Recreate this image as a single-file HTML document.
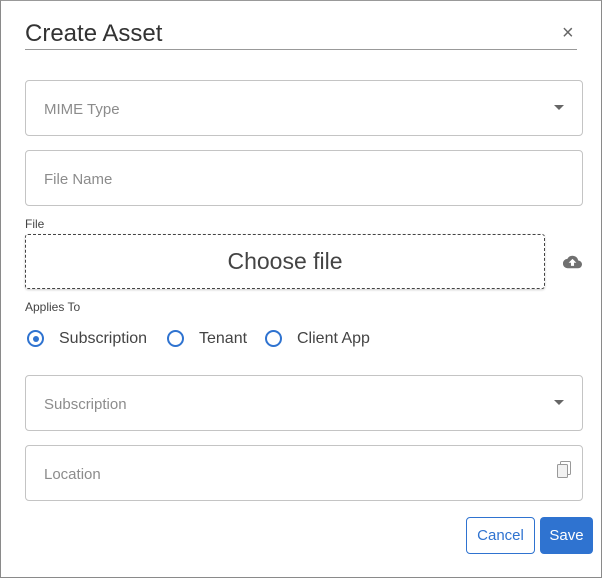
<!DOCTYPE html>
<html><head><style>
*{box-sizing:border-box;margin:0;padding:0}
body{width:602px;height:579px;background:#fff;font-family:"Liberation Sans",sans-serif;position:relative;overflow:hidden}
.frame{position:absolute;left:0;top:0;width:602px;height:578px;border:1px solid #8a8a8a;border-top-color:#999}
.abs{position:absolute}
.box{position:absolute;left:25px;width:558px;height:56px;border:1px solid #c4c4c4;border-radius:4px}
.ph{position:absolute;left:18px;top:20px;font-size:15px;color:#8c8c8c}
.tri{position:absolute;right:18px;top:24px;width:0;height:0;border-left:5px solid transparent;border-right:5px solid transparent;border-top:5px solid #666}
.radio{position:absolute;top:330px;width:17px;height:17px;border:2px solid #2f73d0;border-radius:50%}
.rl{position:absolute;top:330px;font-size:16px;color:#444}
</style></head><body>
<div class="frame"></div>
<div class="abs" style="left:25px;top:20px;font-size:24px;color:#333">Create Asset</div>
<div class="abs" style="left:25px;top:49px;width:552px;height:1px;background:#999"></div>
<div class="abs" style="left:562px;top:22px;font-size:20px;color:#666">×</div>

<div class="box" style="top:80px"><div class="ph">MIME Type</div><div class="tri"></div></div>
<div class="box" style="top:150px"><div class="ph">File Name</div></div>

<div class="abs" style="left:25px;top:217px;font-size:12px;color:#444">File</div>
<div class="abs" style="left:25px;top:234px;width:520px;height:55px;border:1px dashed #444;border-radius:3px;box-shadow:0 1px 2px rgba(0,0,0,.2);text-align:center;line-height:53px;font-size:23px;color:#444">Choose file</div>
<svg class="abs" style="left:563px;top:255px" width="19" height="14" viewBox="0 0 24 18"><path d="M19.4 7A7.5 7.5 0 0 0 5.4 5 6 6 0 0 0 6 17h13a5 5 0 0 0 .4-10z" fill="#707070"/><path d="M12 5l-5 5h3v4h4v-4h3z" fill="#fff"/></svg>

<div class="abs" style="left:25px;top:300px;font-size:12px;color:#444">Applies To</div>
<div class="radio" style="left:27px"><div style="position:absolute;left:3.5px;top:3.5px;width:6px;height:6px;border-radius:50%;background:#2f73d0"></div></div>
<div class="rl" style="left:59px">Subscription</div>
<div class="radio" style="left:167px"></div>
<div class="rl" style="left:199px">Tenant</div>
<div class="radio" style="left:265px"></div>
<div class="rl" style="left:297px">Client App</div>

<div class="box" style="top:375px"><div class="ph">Subscription</div><div class="tri"></div></div>
<div class="box" style="top:445px"><div class="ph">Location</div>
<svg class="abs" style="right:10px;top:14px" width="16" height="18" viewBox="0 0 16 18"><rect x="4.5" y="1.5" width="10" height="13" rx="1" fill="#fff" stroke="#999"/><rect x="1.5" y="4.5" width="10" height="13" rx="1" fill="#f2f2f2" stroke="#999"/></svg></div>

<div class="abs" style="left:466px;top:517px;width:69px;height:37px;border:1px solid #2f73d0;border-radius:4px;color:#2f73d0;font-size:15px;text-align:center;line-height:35px">Cancel</div>
<div class="abs" style="left:540px;top:517px;width:53px;height:37px;background:#2f73d0;border-radius:4px;color:#fff;font-size:15px;text-align:center;line-height:37px">Save</div>
</body></html>
